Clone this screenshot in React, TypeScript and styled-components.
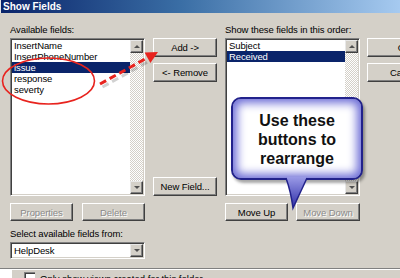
import React from 'react';
import styled, { createGlobalStyle } from 'styled-components';

const GlobalStyle = createGlobalStyle`
  html, body { margin: 0; padding: 0; background: #d4d0c8; }
  body { font-family: "Liberation Sans", Arial, sans-serif; }
`;

const Page = styled.div`
  position: relative;
  width: 400px;
  height: 278px;
  overflow: hidden;
  background: #d4d0c8;
  font-size: 9.5px;
  color: #000;
`;

const TitleBar = styled.div`
  height: 13px;
  display: flex;
  align-items: center;
  padding-left: 2px;
  background: linear-gradient(90deg, #0a246a 0%, #3a6ea5 45%, #a6caf0 100%);
  color: #fff;
  font-weight: bold;
  font-size: 10px;
  border-left: 1px solid #e4e4e4;
`;

const Body = styled.div`
  display: flex;
  gap: 8px;
  padding: 10px 0 0 10px;
`;

const Column = styled.div<{ $w: number }>`
  width: ${p => p.$w}px;
  flex: none;
  display: flex;
  flex-direction: column;
`;

const ButtonColumn = styled.div<{ $w: number; $h?: number }>`
  width: ${p => p.$w}px;
  flex: none;
  display: flex;
  flex-direction: column;
  gap: 6px;
  padding-top: 15px;
  height: ${p => (p.$h ? `${p.$h}px` : 'auto')};
  box-sizing: border-box;
`;

const Label = styled.div<{ $mt?: number }>`
  height: 13px;
  line-height: 13px;
  margin-top: ${p => p.$mt ?? 0}px;
  white-space: nowrap;
  letter-spacing: -0.1px;
`;

const ListBox = styled.div`
  margin-top: 2px;
  height: 158px;
  box-sizing: border-box;
  display: flex;
  background: #fff;
  border-top: 1px solid #808080;
  border-left: 1px solid #808080;
  border-right: 1px solid #fff;
  border-bottom: 1px solid #fff;
  box-shadow: inset 1px 1px 0 #404040, inset -1px -1px 0 #d4d0c8;
  padding: 1px;
`;

const Items = styled.div`
  flex: 1;
  display: flex;
  flex-direction: column;
`;

const Item = styled.div<{ $sel?: boolean }>`
  height: 11px;
  line-height: 11px;
  padding-left: 2px;
  white-space: nowrap;
  letter-spacing: -0.1px;
  background: ${p => (p.$sel ? '#0a246a' : 'transparent')};
  color: ${p => (p.$sel ? '#fff' : '#000')};
`;

const ScrollBar = styled.div`
  width: 13px;
  display: flex;
  flex-direction: column;
  background: repeating-conic-gradient(#ffffff 0 25%, #d4d0c8 0 50%) 0 0 / 2px 2px;
`;

const Track = styled.div`
  flex: 1;
`;

const ArrowBtn = styled.div<{ $up?: boolean }>`
  width: 13px;
  height: 13px;
  box-sizing: border-box;
  background: #d4d0c8;
  border-top: 1px solid #e8e8e8;
  border-left: 1px solid #e8e8e8;
  border-right: 1px solid #404040;
  border-bottom: 1px solid #404040;
  box-shadow: inset -1px -1px 0 #808080;
  display: flex;
  align-items: center;
  justify-content: center;
  &::after {
    content: '';
    width: 0;
    height: 0;
    border-left: 3px solid transparent;
    border-right: 3px solid transparent;
    ${p => (p.$up ? 'border-bottom: 3px solid #505050;' : 'border-top: 3px solid #505050;')}
  }
`;

const Button = styled.div<{ $disabled?: boolean; $w?: number; $h?: number; $mt?: string }>`
  width: ${p => (p.$w ? `${p.$w}px` : '100%')};
  height: ${p => p.$h ?? 19}px;
  margin-top: ${p => p.$mt ?? '0'};
  box-sizing: border-box;
  flex: none;
  display: flex;
  align-items: center;
  justify-content: center;
  white-space: nowrap;
  letter-spacing: -0.1px;
  background: #d4d0c8;
  border-top: 1px solid #fff;
  border-left: 1px solid #fff;
  border-right: 1px solid #404040;
  border-bottom: 1px solid #404040;
  box-shadow: inset -1px -1px 0 #808080;
  color: ${p => (p.$disabled ? '#8a8a8a' : '#000')};
  text-shadow: ${p => (p.$disabled ? '1px 1px 0 #fff' : 'none')};
`;

const ButtonRow = styled.div<{ $gap: number }>`
  display: flex;
  gap: ${p => p.$gap}px;
  margin-top: 7px;
`;

const Combo = styled.div`
  margin-top: 2px;
  height: 17px;
  box-sizing: border-box;
  display: flex;
  align-items: center;
  background: #fff;
  border-top: 1px solid #808080;
  border-left: 1px solid #808080;
  border-right: 1px solid #fff;
  border-bottom: 1px solid #fff;
  box-shadow: inset 1px 1px 0 #404040, inset -1px -1px 0 #d4d0c8;
  padding: 1px 1px 1px 3px;
`;

const ComboValue = styled.div`
  flex: 1;
  letter-spacing: -0.1px;
`;

const Separator = styled.div`
  margin-top: 9px;
  height: 1px;
  background: #808080;
  border-bottom: 1px solid #fff;
`;

const BottomRow = styled.div`
  display: flex;
  align-items: flex-start;
  height: 20px;
`;

const Corner = styled.div`
  width: 12px;
  align-self: stretch;
  background: #fff;
`;

const CheckBox = styled.div`
  width: 11px;
  height: 11px;
  box-sizing: border-box;
  margin: 2px 5px 0 12px;
  background: #fff;
  border-top: 1px solid #808080;
  border-left: 1px solid #808080;
  box-shadow: inset 1px 1px 0 #404040;
`;

const CheckText = styled.div`
  margin-top: 3px;
  white-space: nowrap;
`;

const Overlay = styled.svg`
  position: absolute;
  left: 0;
  top: 0;
  pointer-events: none;
`;

const Callout = styled.div`
  position: absolute;
  left: 231px;
  top: 97px;
  width: 132px;
  height: 83px;
  box-sizing: border-box;
  border: 2px solid #22228c;
  border-radius: 10px;
  background: #fff;
  box-shadow: inset 0 0 10px 4px #6b6bd6, 2px 3px 3px rgba(0, 0, 0, 0.35);
  padding-top: 12px;
  text-align: center;
  font-family: "Liberation Sans", Arial, sans-serif;
  font-weight: bold;
  font-size: 16px;
  line-height: 19px;
  color: #111;
`;

const available = ['InsertName', 'InsertPhoneNumber', 'issue', 'response', 'severty'];
const shown = ['Subject', 'Received'];

const Scroll = () => (
  <ScrollBar>
    <ArrowBtn $up />
    <Track />
    <ArrowBtn />
  </ScrollBar>
);

export default function App() {
  return (
    <>
      <GlobalStyle />
      <Page>
        <TitleBar>Show Fields</TitleBar>
        <Body>
          <Column $w={135}>
            <Label>Available fields:</Label>
            <ListBox>
              <Items>
                {available.map(f => (
                  <Item key={f} $sel={f === 'issue'}>{f}</Item>
                ))}
              </Items>
              <Scroll />
            </ListBox>
            <ButtonRow $gap={9}>
              <Button $disabled $w={63} $h={18}>Properties</Button>
              <Button $disabled $w={63} $h={18}>Delete</Button>
            </ButtonRow>
            <Label $mt={6}>Select available fields from:</Label>
            <Combo>
              <ComboValue>HelpDesk</ComboValue>
              <ArrowBtn />
            </Combo>
          </Column>

          <ButtonColumn $w={64} $h={173}>
            <Button>Add -&gt;</Button>
            <Button>&lt;- Remove</Button>
            <Button $mt="auto">New Field...</Button>
          </ButtonColumn>

          <Column $w={135}>
            <Label>Show these fields in this order:</Label>
            <ListBox>
              <Items>
                {shown.map(f => (
                  <Item key={f} $sel={f === 'Received'}>{f}</Item>
                ))}
              </Items>
              <Scroll />
            </ListBox>
            <ButtonRow $gap={8}>
              <Button $w={63} $h={18}>Move Up</Button>
              <Button $disabled $w={64} $h={18}>Move Down</Button>
            </ButtonRow>
          </Column>

          <ButtonColumn $w={75} style={{ marginLeft: -1 }}>
            <Button>OK</Button>
            <Button>Cancel</Button>
          </ButtonColumn>
        </Body>
        <Separator />
        <BottomRow>
          <Corner />
          <CheckBox />
          <CheckText>Only show views created for this folder</CheckText>
        </BottomRow>

        <Overlay width={400} height={278}>
          <ellipse cx={48.5} cy={81} rx={46} ry={23} fill="none" stroke="#e8231e" strokeWidth={1.6} />
          <line x1={101} y1={85} x2={146} y2={60} stroke="rgba(0,0,0,0.18)" strokeWidth={3} strokeDasharray="7 4" transform="translate(1.5 2)" />
          <line x1={100} y1={84} x2={146} y2={58.5} stroke="#e8231e" strokeWidth={3} strokeDasharray="7 4" />
          <polygon points="158,52 150.4,63.1 144.6,52.5" fill="#e8231e" />
        </Overlay>

        <Callout>
          Use these
          <br />
          buttons to
          <br />
          rearrange
        </Callout>
        <Overlay width={400} height={278}>
          <defs>
            <linearGradient id="tail" x1="0" y1="0" x2="0" y2="1">
              <stop offset="0" stopColor="#9a9ae6" />
              <stop offset="1" stopColor="#2e2ea8" />
            </linearGradient>
          </defs>
          <path d="M286 177 Q291 192 293 208 L307 177 Z" fill="url(#tail)" />
          <path d="M286 178 Q291 192 293 208 L307 178" fill="none" stroke="#22228c" strokeWidth={1.5} />
        </Overlay>
      </Page>
    </>
  );
}
